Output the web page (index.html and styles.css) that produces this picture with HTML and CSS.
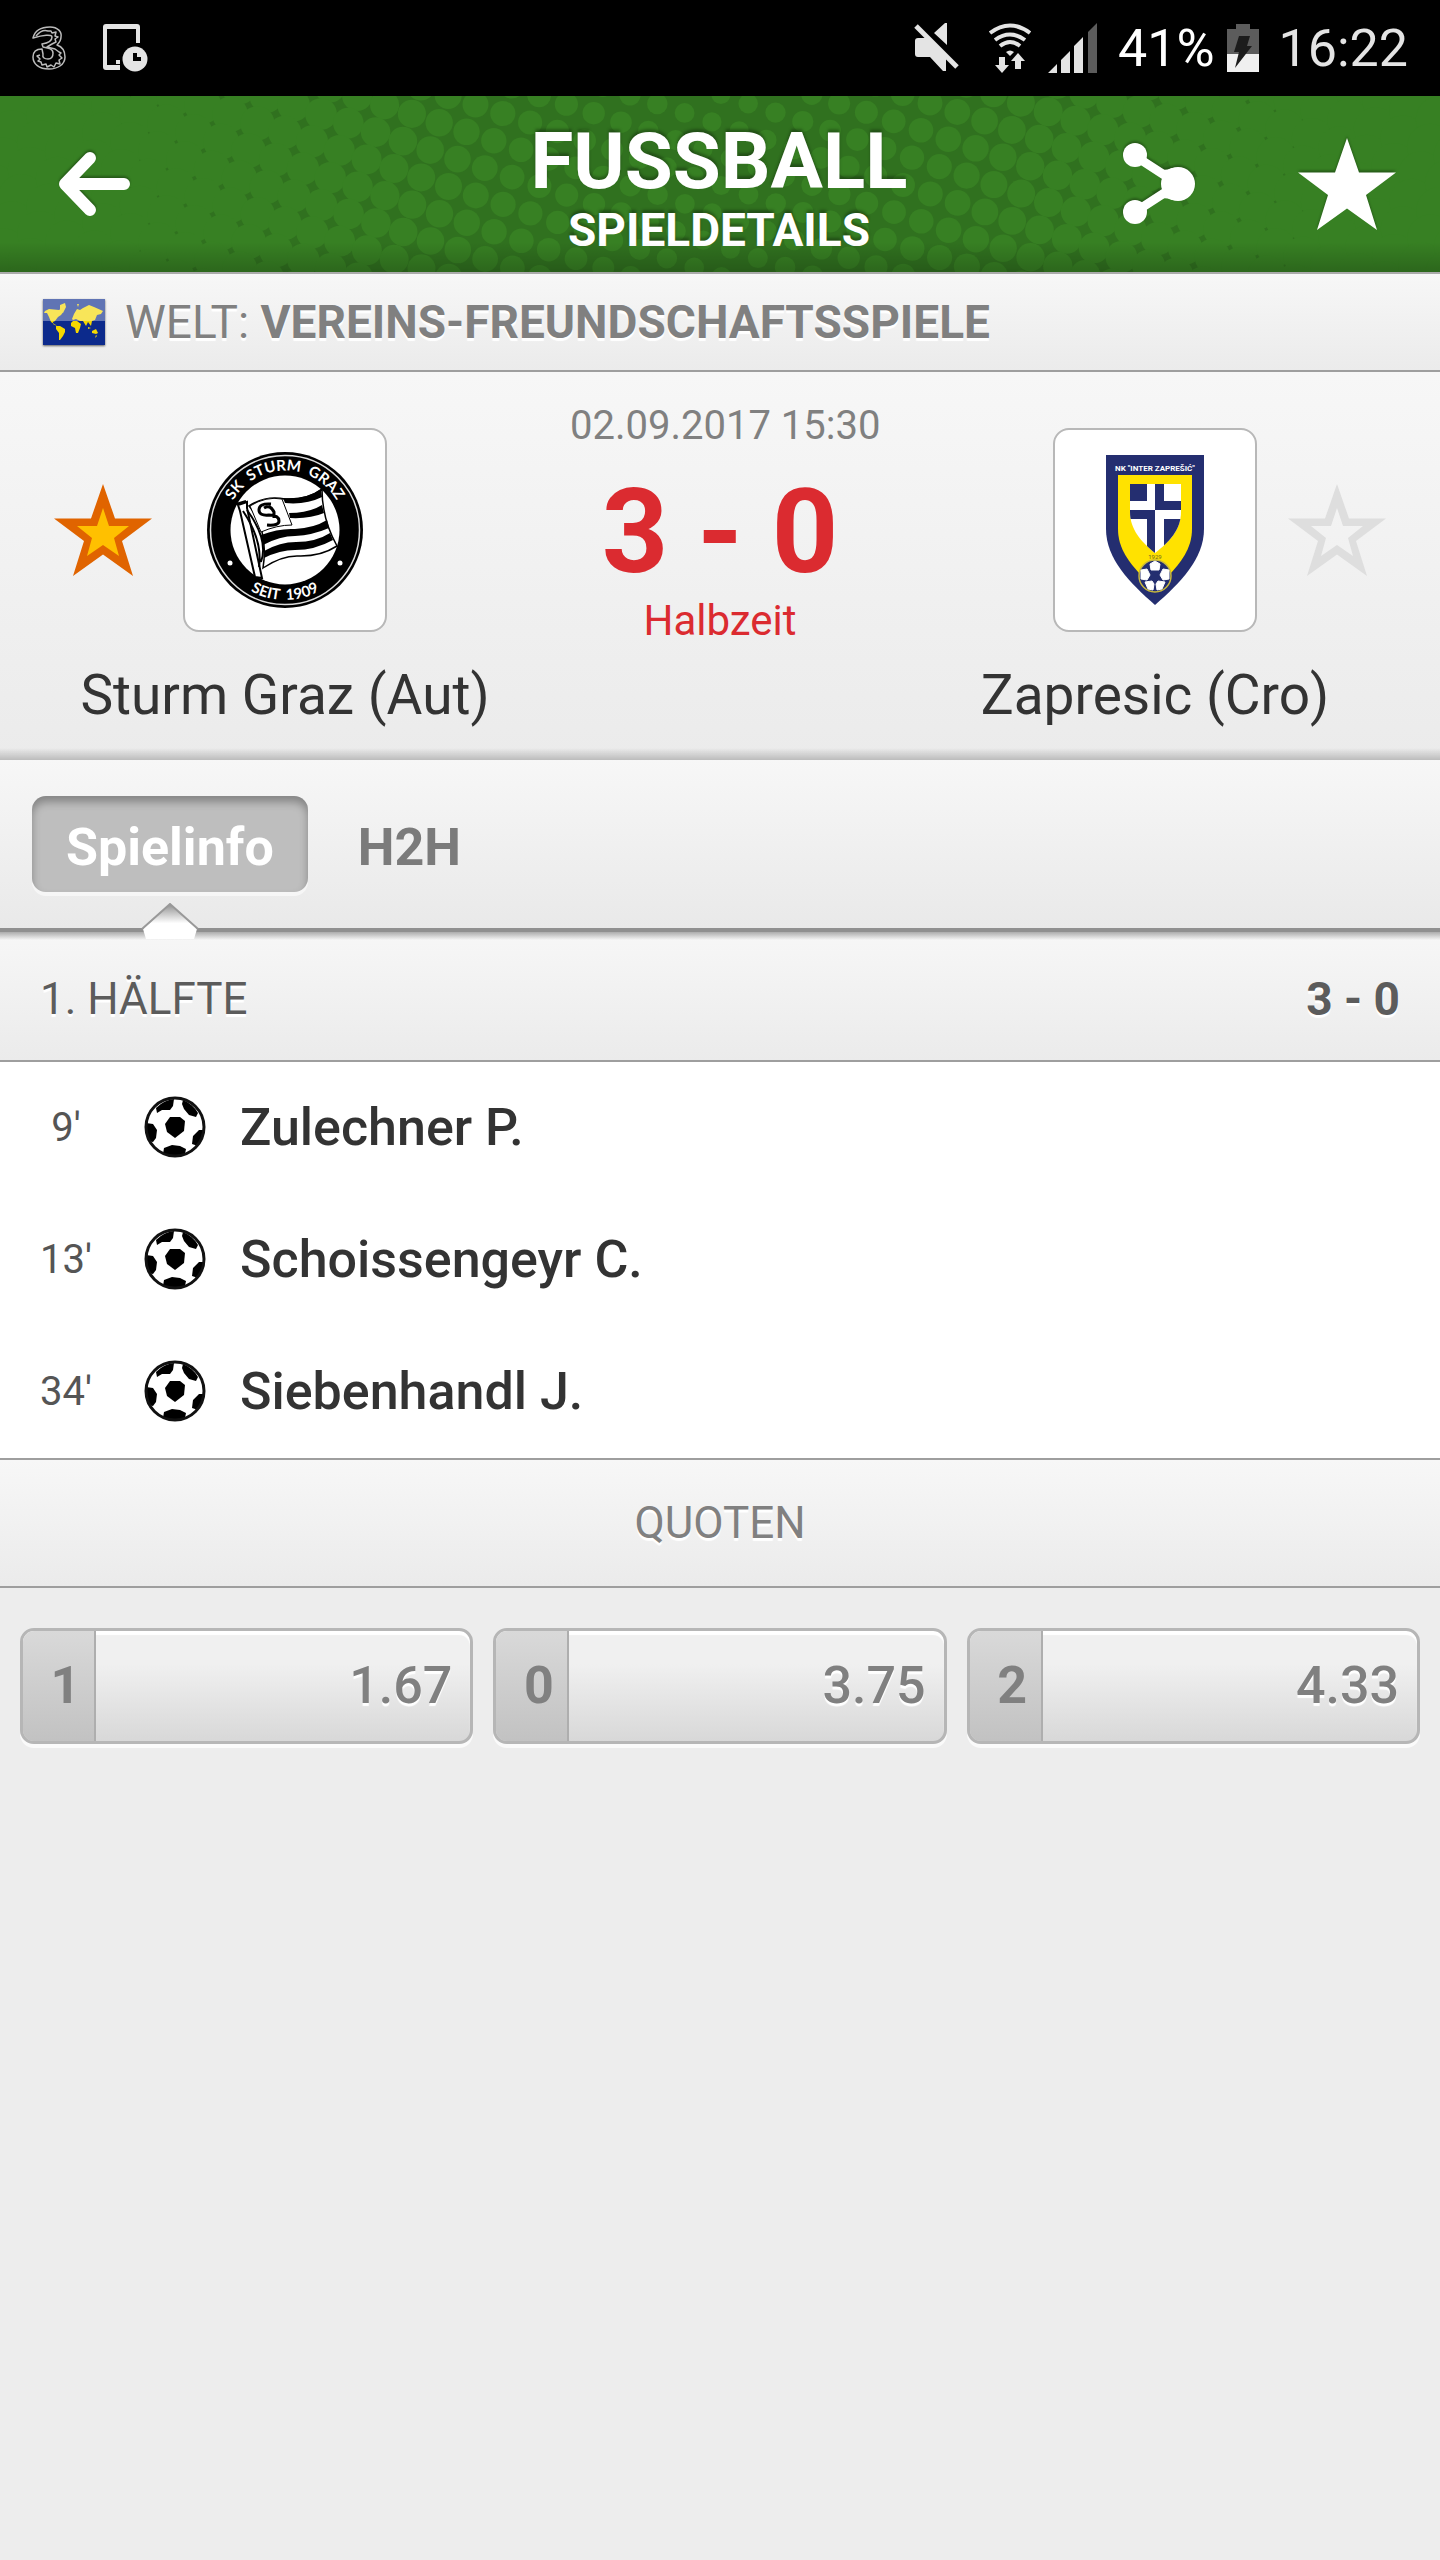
FILE: index.html
```html
<!DOCTYPE html>
<html lang="de">
<head>
    <meta charset="UTF-8">
    <meta name="viewport" content="width=device-width, initial-scale=1.0">
    <title>Fussball - Spieldetails</title>
    <link rel="stylesheet" href="styles.css">
</head>
<body>
    <!-- shared shapes -->
    <svg class="defs" width="0" height="0" aria-hidden="true">
        <symbol id="ball" viewBox="0 0 62 62">
            <circle cx="31" cy="31" r="29" fill="#fff"/>
            <path d="M26 21l10 0 5 4-1 10-9 7-8-6-2-8z"/>
            <path d="M12 12q8-8 18-9l-1 7-3 4-8 0-5 3zM39 4q10 4 15 13l-2 4-7-2-5-6-2-5zM2 27l7 1 4 6-1 8-3 4-5-1q-3-9-2-18zM60 34q-1 9-6 16l-6-2 1-8 6-6zM19 58l1-6 8-3 8 1 6 3-1 5q-10 3-22 0z"/>
            <circle cx="31" cy="31" r="29" fill="none" stroke="#111" stroke-width="3"/>
        </symbol>
        <symbol id="star" viewBox="0 0 98 92">
            <path d="M49 0l12 34.500h37L68 57l11 35-30-21.500L19 92l11-35L0 34.500h37z"/>
        </symbol>
    </svg>

    <div class="status-bar">
        <div class="status-group">
            <svg class="carrier" width="34" height="44" viewBox="0 0 34 44" fill="none" stroke="#bbb" stroke-width="1.500" stroke-linejoin="round">
                <path d="M1 12C3 4 10 1 18 1c8 0 12 5 11 10 0 4-2 6-4 8 6 2 8 7 8 12 0 8-8 12-16 12C7 43 1 38 1 31c0-6 4-8 9-8l1 5c-1 4 2 5 5 5 4 0 5-3 5-6 0-4-4-5-10-6l-1-3c7-1 10-3 10-7 0-3-9-2-19 1z"/>
                <path d="M4 10c5-6 9-6 12-5l3 0 1 2 4-1-1 4 3 1-3 2 1 3-4 2-5 3 8 2 4 3 2 1-2 2 3 3-3 2 1 4-4-1-2 4-3-2-4 2-1-3-4 1-1-3-3-1 2-2-3-3 3-1"/>
            </svg>
            <svg width="46" height="50" viewBox="0 0 46 50" fill="#e4e4e4">
                <path d="M4 1h31q3 0 3 3v16h-4V6H5v36h13v5H4q-3 0-3-3V4q0-3 3-3z"/>
                <rect x="14" y="37" width="4" height="4"/>
                <circle cx="33" cy="36" r="12.500"/>
                <path d="M31 30h4v4h4v4h-8z" fill="#000"/>
            </svg>
        </div>
        <div class="status-group right">
            <svg class="mute" width="46" height="50" viewBox="0 0 46 50" fill="#e4e4e4">
                <path d="M1 18q0-3 3-3h8l20 20v13l-3 0-13-14H4q-3 0-3-3zM20 10L31 0h2v22z"/>
                <path d="M2 3l41 41" stroke="#e4e4e4" stroke-width="5"/>
            </svg>
            <svg class="wifi" width="44" height="50" viewBox="0 0 44 50" fill="none" stroke="#e4e4e4" stroke-width="4">
                <path d="M2 10q20-15 40 0M7 17q15-11 30 0M12 23q10-8 20 0"/>
                <path d="M18 29q4-3 8 0l-4 4zM11 34h6v8h4l-7 8-7-8h4zM27 46h6v-8h4l-7-8-7 8h4z" fill="#e4e4e4" stroke="none"/>
            </svg>
            <svg class="signal" width="50" height="50" viewBox="0 0 50 50" fill="#e4e4e4">
                <path d="M0 50h9V41zM13 50h9V28l-9 9zM26 50h9V14l-9 9z"/>
                <path d="M40 50h9V0l-9 9z" fill="#5c5c5c"/>
            </svg>
            <span class="battery-level">41%</span>
            <svg class="battery" width="32" height="48" viewBox="0 0 32 48">
                <path d="M9 0h14v5h9v26H0V5h9z" fill="#5c5c5c"/>
                <path d="M0 30h32v18H0z" fill="#f0f0f0"/>
                <path d="M12 12h11l-3 10h5L8 44l4-16H7z" fill="#1c1c1c"/>
            </svg>
            <span class="clock">16:22</span>
        </div>
    </div>

    <header class="app-header">
        <svg class="halftone" id="halftone" viewBox="0 0 1440 176" preserveAspectRatio="xMidYMid slice" aria-hidden="true"></svg>
        <button class="icon-button" aria-label="Zurück">
            <svg width="72" height="68" viewBox="0 0 72 68" fill="none" stroke="#fff" stroke-width="12" stroke-linecap="round" stroke-linejoin="round">
                <path d="M8 34h58M32 8L7 34l25 26"/>
            </svg>
        </button>
        <div class="titles">
            <h1>FUSSBALL</h1>
            <div class="subtitle">SPIELDETAILS</div>
        </div>
        <div class="actions">
            <button class="icon-button" aria-label="Teilen">
                <svg width="74" height="84" viewBox="0 0 74 84" fill="#fff">
                    <path d="M13 14l43 28-43 28" fill="none" stroke="#fff" stroke-width="9"/>
                    <path d="M40 28q6 0 10-2v32q-4-2-10-2 4-14 0-28z"/>
                    <circle cx="13" cy="13" r="12"/>
                    <circle cx="13" cy="70" r="12"/>
                    <circle cx="56" cy="42" r="17"/>
                </svg>
            </button>
            <button class="icon-button" aria-label="Favorit">
                <svg width="98" height="92" fill="#fff"><use href="#star"/></svg>
            </button>
        </div>
    </header>

    <div class="league">
        <svg class="flag" width="62" height="46" viewBox="0 0 62 46">
            <rect width="62" height="46" fill="#0c2a8c"/>
            <path d="M2 12l4-2 10 1 3-2 2 3-3 4-3 2-3 4-2 1 0 2 4 2 3 0 5 3 0 3-2 4-3 4-1 0 0-7-3-4 0-4-5-3-2-5-2-4-3 0zM17 6l5-2 1 4-3 6-3-3zM30 22l4 0 4 3-1 4-2 5-2 0-1-5-4-2 0-3zM29 20l2-5 3-5 3 1 3-2 6-3 5 2 9 4-2 3-4 1-2 5-3 1-1 5-3-4-2 4-3-5-3 0-4-2-3 1zM49 32l4-2 2 4-2 1-4-1z" fill="#f5d800"/>
            <path d="M34 5l2 0-1 3zM45 28l3 1-3 1zM54 37l-2 2 1-3z" fill="#f5d800"/>
            <rect width="62" height="22" fill="#fff" opacity="0.350"/>
        </svg>
        <span>WELT: <strong>VEREINS-FREUNDSCHAFTSSPIELE</strong></span>
    </div>

    <section class="match">
        <div class="team">
            <div class="team-row">
                <button class="fav fav-left" aria-label="Sturm Graz Favorit">
                    <svg width="98" height="92" viewBox="0 0 98 92">
                        <path d="M49 0l12 34.500h37L68 57l11 35-30-21.500L19 92l11-35L0 34.500h37z" fill="#e06400"/>
                        <path d="M49 24l6 18h20L60 54l5 18-16-11-16 11 5-18-15-12h20z" fill="#ffc000"/>
                    </svg>
                </button>
                <div class="crest">
                    <svg width="156" height="156" viewBox="0 0 156 156">
                        <defs>
                            <path id="arc-top" d="M18.500 78a59.500 59.500 0 0 1 119 0"/>
                            <path id="arc-bottom" d="M8 78a70 70 0 0 0 140 0"/>
                        </defs>
                        <circle cx="78" cy="78" r="78"/>
                        <circle cx="78" cy="78" r="74.500" fill="none" stroke="#ddd" stroke-width="1.500"/>
                        <circle cx="78" cy="78" r="54.500" fill="#fff"/>
                        <text class="crest-text"><textPath href="#arc-top" startOffset="50%" text-anchor="middle">SK  STURM  GRAZ</textPath></text>
                        <text class="crest-text"><textPath href="#arc-bottom" startOffset="50%" text-anchor="middle">SEIT  1909</textPath></text>
                        <circle cx="23" cy="111" r="2.500" fill="#fff"/>
                        <circle cx="133" cy="111" r="2.500" fill="#fff"/>
                        <path d="M42 54q17-11 36-7 22 1 37-10 0 30 15 57-17 11-40 10-16 0-34 12 6-38-14-62z" fill="#fff" stroke="#000" stroke-width="1.500"/>
                        <path d="M76 46q23 2 38-9l1 8q-16 8-37 6zM82 61q20 0 33-8l2 8q-14 6-34 5zM54 83q18-7 34-6 19-1 32-9l2 8q-16 7-34 8-15 0-32 9zM57 99q16-9 32-9 20 0 34-9l3 7q-18 10-38 10-15 0-31 8z"/>
                        <path d="M43 54q16-10 32-7l10 26q-15 0-31 7z" fill="#fff" stroke="#000" stroke-width="1"/>
                        <path d="M64 52q-12-1-12 6 0 6 10 5 10 0 10 6 0 5-12 4M57 56q6-4 10 4l0 6" fill="none" stroke="#000" stroke-width="3"/>
                        <path d="M31 53l9-3 0 6 15 70-7-1-15-66z" fill="#fff" stroke="#000" stroke-width="2"/>
                        <path d="M36 59q20 30 16 56M40 58q22 30 14 52M29 52l10-3" fill="none" stroke="#000" stroke-width="2"/>
                    </svg>
                </div>
            </div>
            <div class="team-name">Sturm Graz (Aut)</div>
        </div>

        <div class="result">
            <div class="date">02.09.2017 15:30</div>
            <div class="score">3 - 0</div>
            <div class="state">Halbzeit</div>
        </div>

        <div class="team">
            <div class="team-row">
                <div class="crest">
                    <svg width="98" height="150" viewBox="0 0 98 150">
                        <path d="M0 0h98v74c0 30-24 54-49 76C24 128 0 104 0 74z" fill="#242e70"/>
                        <path d="M12 20h74v54c0 20-12 34-22 45H34C24 108 12 94 12 74z" fill="#ffe200"/>
                        <text class="shield-text" x="49" y="16" text-anchor="middle">NK "INTER ZAPREŠIĆ"</text>
                        <g clip-path="url(#inner-shield)">
                            <path d="M24 29h51v70H24z" fill="#fff"/>
                            <path d="M24 29h17v17H24zM49 29h9v17h17v9H49zM24 55h25v45H41V64H24zM58 64h17v36H58z" fill="#242e70"/>
                        </g>
                        <clipPath id="inner-shield"><path d="M24 29h51v28c0 18-12 30-26 41C35 87 24 74 24 57z"/></clipPath>
                        <text class="shield-year" x="49" y="104" text-anchor="middle">1929</text>
                        <circle cx="49" cy="121" r="16" fill="#242e70" stroke="#c9b93c" stroke-width="1.500"/>
                        <path d="M49 106l5 3-1 6h-8l-1-6zM35 115l6-1 3 6-3 5-6-1zM63 115l-6-1-3 6 3 5 6-1zM39 127l7-1 2 3-1 6-5-1zM59 127l-7-1-2 3 1 6 5-1z" fill="#fff" stroke="#fff" stroke-width="1"/>
                    </svg>
                </div>
                <button class="fav fav-right" aria-label="Zapresic Favorit">
                    <svg width="98" height="92" viewBox="0 0 98 92">
                        <path d="M49 0l12 34.500h37L68 57l11 35-30-21.500L19 92l11-35L0 34.500h37zM49 24l-6 18H23l15 12-5 18 16-11 16 11-5-18 15-12H55z" fill="#dedede" fill-rule="evenodd"/>
                    </svg>
                </button>
            </div>
            <div class="team-name">Zapresic (Cro)</div>
        </div>
    </section>

    <nav class="tabs">
        <button class="tab active">Spielinfo
            <svg class="pointer" width="64" height="38" viewBox="0 0 64 38" aria-hidden="true">
                <defs>
                    <linearGradient id="pointer-fill" x1="0" y1="0" x2="0" y2="1">
                        <stop offset="0" stop-color="#909090"/>
                        <stop offset="0.550" stop-color="#fff"/>
                    </linearGradient>
                </defs>
                <path d="M5 26L32 1l27 25-3 10H8z" fill="url(#pointer-fill)"/>
                <path d="M4 26L32 1l28 25" fill="none" stroke="#999" stroke-width="2"/>
            </svg>
        </button>
        <button class="tab">H2H</button>
    </nav>

    <div class="section-title half">
        <span>1. HÄLFTE</span>
        <strong>3 - 0</strong>
    </div>

    <ul class="events">
        <li class="event">
            <span class="minute">9'</span>
            <svg width="62" height="62"><use href="#ball"/></svg>
            <span class="player">Zulechner P.</span>
        </li>
        <li class="event">
            <span class="minute">13'</span>
            <svg width="62" height="62"><use href="#ball"/></svg>
            <span class="player">Schoissengeyr C.</span>
        </li>
        <li class="event">
            <span class="minute">34'</span>
            <svg width="62" height="62"><use href="#ball"/></svg>
            <span class="player">Siebenhandl J.</span>
        </li>
    </ul>

    <div class="section-title quotes">QUOTEN</div>

    <div class="odds">
        <button class="odd"><span class="odd-key">1</span><span class="odd-value">1.67</span></button>
        <button class="odd"><span class="odd-key">0</span><span class="odd-value">3.75</span></button>
        <button class="odd"><span class="odd-key">2</span><span class="odd-value">4.33</span></button>
    </div>

    <script src="halftone.js"></script>
</body>
</html>
```

FILE: styles.css
```css
:root {
    --green: #378023;
    --dark-green: #30711f;
    --red: #db2b30;
    --grey-text: #808080;
    --dark-text: #333;
    --line: #9e9e9e;
    --bar: linear-gradient(#f7f7f7, #ebebeb);
}

* {
    box-sizing: border-box;
}

body {
    margin: 0;
    min-height: 100vh;
    background: #ededed;
    color: var(--dark-text);
    font-family: Roboto, "Liberation Sans", sans-serif;
}

button {
    border: none;
    padding: 0;
    background: none;
    color: inherit;
    font-family: inherit;
    cursor: pointer;
}

svg {
    display: block;
    flex-shrink: 0;
}

.defs {
    position: absolute;
}

/* status bar */
.status-bar {
    display: flex;
    justify-content: space-between;
    height: 96px;
    padding: 0 32px;
    background: #000;
    color: #e4e4e4;
    font-size: 52px;
}

.status-group {
    display: flex;
    align-items: center;
    gap: 36px;
}

.status-group.right {
    gap: 16px;
}

.mute {
    margin-right: 12px;
}

.battery-level {
    margin: 0 -4px 0 4px;
    color: #fff;
}

.clock {
    margin-left: 4px;
}

/* header */
.app-header {
    position: relative;
    display: grid;
    grid-template-columns: 1fr auto 1fr;
    align-items: center;
    height: 178px;
    padding: 0 44px 0 58px;
    border-bottom: 2px solid #aaa;
    background: var(--dark-green);
    color: #fff;
    text-align: center;
    text-shadow: 0 -3px 3px rgba(0, 0, 0, 0.3);
}

.app-header::after {
    content: "";
    position: absolute;
    left: 0;
    right: 0;
    bottom: 0;
    height: 30px;
    background: linear-gradient(transparent, rgba(0, 0, 0, 0.2));
}

.halftone {
    position: absolute;
    width: 100%;
    height: 100%;
    fill: var(--green);
}

.titles,
.icon-button {
    position: relative;
}

.titles {
    padding: 20px 16px 0 0;
}

.icon-button svg {
    filter: drop-shadow(0 -2px 1px rgba(0, 0, 0, 0.3));
}

h1 {
    margin: 0;
    font-size: 78px;
    line-height: 72px;
}

.subtitle {
    font-size: 46px;
    font-weight: bold;
    line-height: 64px;
}

.actions {
    display: flex;
    align-items: center;
    justify-content: flex-end;
    gap: 102px;
}

/* league */
.league {
    display: flex;
    align-items: center;
    gap: 20px;
    height: 98px;
    padding: 0 43px;
    border-bottom: 2px solid var(--line);
    background: var(--bar);
    color: var(--grey-text);
    font-size: 46px;
    text-shadow: 0 3px 1px #fff;
}

.flag {
    box-shadow: 0 1px 2px rgba(0, 0, 0, 0.6);
}

/* match */
.match {
    display: grid;
    grid-template-columns: 1fr 300px 1fr;
    padding: 56px 0 33px;
    background: linear-gradient(transparent calc(100% - 12px), rgba(0, 0, 0, 0.2)), var(--bar);
}

.team {
    text-align: center;
}

.team-row {
    display: grid;
    grid-template-columns: 1fr 204px 1fr;
    align-items: center;
}

.fav-left {
    justify-self: end;
    margin-right: 31px;
}

.fav-right {
    justify-self: start;
    margin-left: 31px;
}

.crest {
    grid-column: 2;
    display: flex;
    align-items: center;
    justify-content: center;
    height: 204px;
    border: 2px solid #b8b8b8;
    border-radius: 16px;
    background: #fff;
}

.crest-text {
    fill: #fff;
    font-family: Lato, sans-serif;
    font-size: 15px;
    font-weight: bold;
    white-space: pre;
}

.shield-text {
    fill: #fff;
    font-size: 8px;
    font-weight: bold;
}

.shield-year {
    fill: #6b6420;
    font-size: 6px;
}

.team-name {
    margin-top: 31px;
    font-size: 55px;
    line-height: 64px;
}

.result {
    margin-top: -28px;
    text-align: center;
    white-space: nowrap;
}

.date {
    color: var(--grey-text);
    font-size: 40px;
    line-height: 52px;
}

.score {
    margin: 22px 0 6px;
    color: var(--red);
    font-size: 116px;
    font-weight: bold;
    line-height: 116px;
}

.state {
    color: var(--red);
    font-size: 42px;
    line-height: 50px;
}

/* tabs */
.tabs {
    display: flex;
    gap: 16px;
    height: 168px;
    padding: 36px 32px;
    background: linear-gradient(#f7f7f7, #e9e9e9);
}

.tab {
    position: relative;
    height: 96px;
    padding: 6px 34px 0;
    border-radius: 14px;
    color: #7b7b7b;
    font-size: 52px;
    font-weight: bold;
}

.tab.active {
    background: #bebebe;
    box-shadow: inset 0 6px 8px rgba(0, 0, 0, 0.3), 0 4px 0 #f6f6f6;
    color: #fff;
}

.pointer {
    position: absolute;
    top: 107px;
    left: 50%;
    margin-left: -32px;
}

/* section titles */
.section-title {
    display: flex;
    align-items: center;
    justify-content: space-between;
    height: 130px;
    padding: 0 40px;
    border-bottom: 2px solid var(--line);
    background: var(--bar);
    color: var(--grey-text);
    font-size: 44px;
    text-shadow: 0 3px 1px #fff;
}

.half {
    height: 134px;
    padding-top: 6px;
    border-top: 4px solid #909090;
    background: linear-gradient(rgba(0, 0, 0, 0.3), transparent 8px), var(--bar);
    color: #5c5c5c;
}

.half strong {
    font-size: 46px;
}

.quotes {
    height: 128px;
    justify-content: center;
}

/* events */
.events {
    margin: 0;
    padding: 0;
    border-bottom: 2px solid var(--line);
    background: #fff;
    list-style: none;
}

.event {
    display: flex;
    align-items: center;
    height: 132px;
    padding-bottom: 2px;
}

.minute {
    width: 132px;
    margin-right: 12px;
    color: #555;
    font-size: 40px;
    text-align: center;
}

.player {
    margin-left: 34px;
    font-size: 52px;
    font-weight: 500;
}

/* odds */
.odds {
    display: grid;
    grid-template-columns: repeat(3, 1fr);
    gap: 20px;
    padding: 40px 20px;
}

.odd {
    display: flex;
    height: 116px;
    overflow: hidden;
    border: 3px solid #b6b6b6;
    border-radius: 14px;
    background: linear-gradient(#f0f0f0 30%, #d8d8d8);
    box-shadow: 0 4px 0 #fafafa, inset 0 4px 1px #fff;
    color: var(--grey-text);
    font-size: 52px;
    font-weight: 500;
    line-height: 110px;
}

.odd-key {
    width: 73px;
    padding-left: 14px;
    border-right: 2px solid #aeaeae;
    background: linear-gradient(#d9d9d9, #c2c2c2);
    font-weight: bold;
}

.odd-value {
    flex: 1;
    padding-right: 18px;
    text-align: right;
    text-shadow: 0 3px 1px #fff;
}
```

FILE: halftone.js
```js
// green halftone: a tilted grid of dots that grow towards both edges
const halftone = document.getElementById('halftone');
let dots = '';

for (let i = -5; i < 60; i++) {
    for (let j = -20; j < 12; j++) {
        const x = 21 + i * 27.3 - j * 9;
        const y = 10 + i * 9 + j * 27.3;
        if (x < -30 || x > 1470 || y < -30 || y > 206) continue;
        const d = Math.abs(x - 720);
        const r = 9.5 + d * 0.012 + d * d * 0.00001;
        dots += `<circle cx="${x.toFixed(1)}" cy="${y.toFixed(1)}" r="${r.toFixed(1)}"/>`;
    }
}

halftone.innerHTML = dots;
```
